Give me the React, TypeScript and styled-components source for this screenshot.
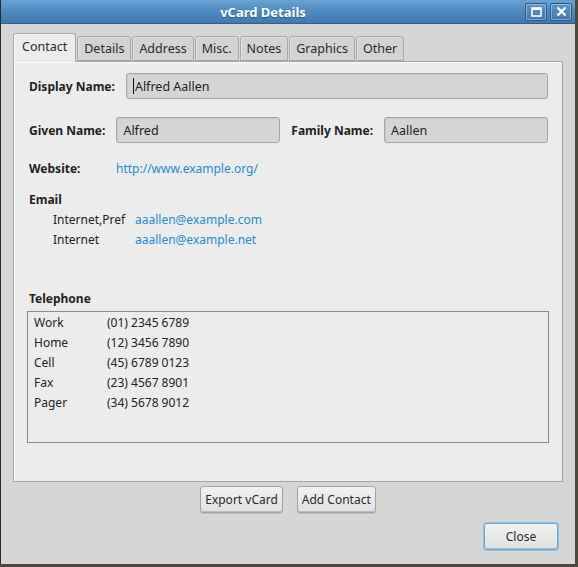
import styled, { createGlobalStyle } from "styled-components";

const GlobalStyle = createGlobalStyle`
  html, body {
    margin: 0;
    padding: 0;
    background: #4b4a3c;
  }
  body {
    font-family: "Noto Sans", "Open Sans", sans-serif;
    font-size: 12px;
    color: #232323;
  }
`;

const tabs = ["Contact", "Details", "Address", "Misc.", "Notes", "Graphics", "Other"];

const emails = [
  { kind: "Internet,Pref", address: "aaallen@example.com" },
  { kind: "Internet", address: "aaallen@example.net" },
];

const phones = [
  { kind: "Work", number: "(01) 2345 6789" },
  { kind: "Home", number: "(12) 3456 7890" },
  { kind: "Cell", number: "(45) 6789 0123" },
  { kind: "Fax", number: "(23) 4567 8901" },
  { kind: "Pager", number: "(34) 5678 9012" },
];

const App = () => {
  return (
    <>
      <GlobalStyle />
      <Window>
        <TitleBar>
          <Title>vCard Details</Title>
          <TitleButtons>
            <TitleButton>
              <svg width="11" height="10" viewBox="0 0 11 10">
                <rect x="1" y="1" width="9" height="8" fill="none" stroke="white" strokeWidth="1.6" />
                <line x1="1" y1="2" x2="10" y2="2" stroke="white" strokeWidth="2" />
              </svg>
            </TitleButton>
            <TitleButton>
              <svg width="11" height="11" viewBox="0 0 11 11">
                <path d="M1.5 1.5 L9.5 9.5 M9.5 1.5 L1.5 9.5" stroke="white" strokeWidth="2.4" />
              </svg>
            </TitleButton>
          </TitleButtons>
        </TitleBar>
        <Body>
          <Notebook>
            <TabRow>
              {tabs.map((t, i) => (
                <Tab key={t} $active={i === 0}>
                  {t}
                </Tab>
              ))}
            </TabRow>
            <Panel>
              <FieldRow>
                <Label>Display Name:</Label>
                <Input $grow>
                  <Caret />
                  Alfred Aallen
                </Input>
              </FieldRow>
              <NameRow>
                <Label>Given Name:</Label>
                <Input $width={164}>Alfred</Input>
                <Label>Family Name:</Label>
                <Input $width={164}>Aallen</Input>
              </NameRow>
              <WebsiteRow>
                <Label $width={76}>Website:</Label>
                <Link>http://www.example.org/</Link>
              </WebsiteRow>
              <SectionHeading>Email</SectionHeading>
              <EmailList>
                {emails.map((e) => (
                  <EmailRow key={e.address}>
                    <EmailKind>{e.kind}</EmailKind>
                    <Link>{e.address}</Link>
                  </EmailRow>
                ))}
              </EmailList>
              <TelHeading>Telephone</TelHeading>
              <PhoneBox>
                {phones.map((p) => (
                  <PhoneRow key={p.kind}>
                    <PhoneKind>{p.kind}</PhoneKind>
                    <span>{p.number}</span>
                  </PhoneRow>
                ))}
              </PhoneBox>
            </Panel>
          </Notebook>
          <ActionRow>
            <Button>Export vCard</Button>
            <Button>Add Contact</Button>
          </ActionRow>
          <CloseRow>
            <Button $focused $width={74}>
              Close
            </Button>
          </CloseRow>
        </Body>
      </Window>
    </>
  );
};

const Window = styled.div`
  width: 574px;
  height: 564px;
  border-left: 1px solid #2e2e2e;
  background: #d6d6d6;
  display: flex;
  flex-direction: column;
`;

const TitleBar = styled.div`
  height: 24px;
  flex-shrink: 0;
  display: flex;
  align-items: center;
  background: linear-gradient(180deg, #6aa3d3 0%, #4f8cc2 45%, #3f79b0 100%);
  border-bottom: 1px solid #2f5f8c;
  box-sizing: border-box;
`;

const Title = styled.div`
  flex: 1;
  text-align: center;
  color: #ffffff;
  font-weight: bold;
  font-size: 13px;
  text-shadow: 0 1px 1px rgba(0, 0, 0, 0.35);
`;

const TitleButtons = styled.div`
  display: flex;
  gap: 3px;
  padding-right: 3px;
`;

const TitleButton = styled.div`
  width: 22px;
  height: 18px;
  box-sizing: border-box;
  border: 1px solid #2d5a85;
  box-shadow: inset 0 0 0 1px rgba(255, 255, 255, 0.35);
  border-radius: 2px;
  background: linear-gradient(180deg, #5d97c9 0%, #3f78ae 100%);
  display: flex;
  align-items: center;
  justify-content: center;
`;

const Body = styled.div`
  flex: 1;
  display: flex;
  flex-direction: column;
  padding: 9px 12px 0 12px;
`;

const Notebook = styled.div`
  display: flex;
  flex-direction: column;
`;

const TabRow = styled.div`
  display: flex;
  align-items: flex-end;
  gap: 1px;
  height: 28px;
  position: relative;
  z-index: 1;
`;

const Tab = styled.div<{ $active?: boolean }>`
  box-sizing: border-box;
  height: ${(p) => (p.$active ? 29 : 25)}px;
  margin-bottom: ${(p) => (p.$active ? -1 : 0)}px;
  padding: 0 ${(p) => (p.$active ? 8 : 6)}px;
  display: flex;
  align-items: center;
  border: 1px solid #a9a9a9;
  border-bottom: ${(p) => (p.$active ? "none" : "1px solid #a9a9a9")};
  border-radius: 3px 3px 0 0;
  background: ${(p) => (p.$active ? "#ececec" : "#d3d3d3")};
  box-shadow: inset 1px 1px 0 ${(p) => (p.$active ? "#f8f8f8" : "#e2e2e2")};
  color: #2a2a2a;
  font-size: 12.5px;
  padding-bottom: ${(p) => (p.$active ? 4 : 0)}px;
`;

const Panel = styled.div`
  width: 550px;
  height: 421px;
  box-sizing: border-box;
  background: #ececec;
  border: 1px solid #a3a3a3;
  box-shadow: inset 1px 1px 0 #ffffff;
  padding: 11px 14px 0 15px;
  display: flex;
  flex-direction: column;
`;

const FieldRow = styled.div`
  display: flex;
  align-items: center;
  gap: 11px;
`;

const NameRow = styled(FieldRow)`
  margin-top: 18px;
`;

const WebsiteRow = styled(FieldRow)`
  margin-top: 16px;
  height: 18px;
`;

const Label = styled.span<{ $width?: number }>`
  font-weight: bold;
  color: #222;
  white-space: nowrap;
  ${(p) => (p.$width ? `width: ${p.$width}px;` : "")}
`;

const Input = styled.div<{ $grow?: boolean; $width?: number }>`
  box-sizing: border-box;
  height: 26px;
  ${(p) => (p.$grow ? "flex: 1;" : `width: ${p.$width}px;`)}
  background: #d5d5d5;
  border: 1px solid #a5a5a5;
  border-radius: 3px;
  box-shadow: inset 1px 1px 1px rgba(0, 0, 0, 0.06);
  display: flex;
  align-items: center;
  padding-left: 6px;
  color: #222;
  font-size: 12.5px;
`;

const Caret = styled.span`
  display: inline-block;
  width: 1px;
  height: 16px;
  background: #111;
  margin-right: 1px;
`;

const Link = styled.span`
  color: #1d8bd1;
`;

const SectionHeading = styled.div`
  font-weight: bold;
  margin-top: 14px;
  height: 18px;
  line-height: 18px;
`;

const EmailList = styled.div`
  display: flex;
  flex-direction: column;
  padding-left: 24px;
  margin-top: 1px;
`;

const EmailRow = styled.div`
  display: flex;
  height: 20px;
  line-height: 20px;
`;

const EmailKind = styled.span`
  width: 82px;
`;

const TelHeading = styled(SectionHeading)`
  margin-top: 40px;
`;

const PhoneBox = styled.div`
  margin-top: 3px;
  margin-left: -2px;
  width: 522px;
  height: 132px;
  box-sizing: border-box;
  border: 1px solid #8c8c8c;
  padding: 1px 0 0 6px;
`;

const PhoneRow = styled.div`
  display: flex;
  height: 20px;
  line-height: 20px;
`;

const PhoneKind = styled.span`
  width: 73px;
`;

const ActionRow = styled.div`
  display: flex;
  justify-content: center;
  gap: 14px;
  margin-top: 4px;
  padding-right: 0;
`;

const CloseRow = styled.div`
  display: flex;
  justify-content: flex-end;
  margin-top: 10px;
  padding-right: 5px;
`;

const Button = styled.div<{ $focused?: boolean; $width?: number }>`
  box-sizing: border-box;
  height: 27px;
  ${(p) => (p.$width ? `width: ${p.$width}px; justify-content: center;` : "padding: 0 4px;")}
  display: flex;
  align-items: center;
  background: linear-gradient(180deg, #f2f2f2 0%, #e0e0e0 100%);
  border: 1px solid ${(p) => (p.$focused ? "#6aa8d8" : "#a2a2a2")};
  box-shadow: ${(p) =>
    p.$focused ? "0 0 0 1px #8cc0e6, inset 0 -1px 0 #bdbdbd" : "inset 0 -1px 0 #bdbdbd, 0 1px 0 #c0c0c0"};
  border-radius: 3px;
  color: #2a2a2a;
  font-size: 12px;
`;

export default App;
